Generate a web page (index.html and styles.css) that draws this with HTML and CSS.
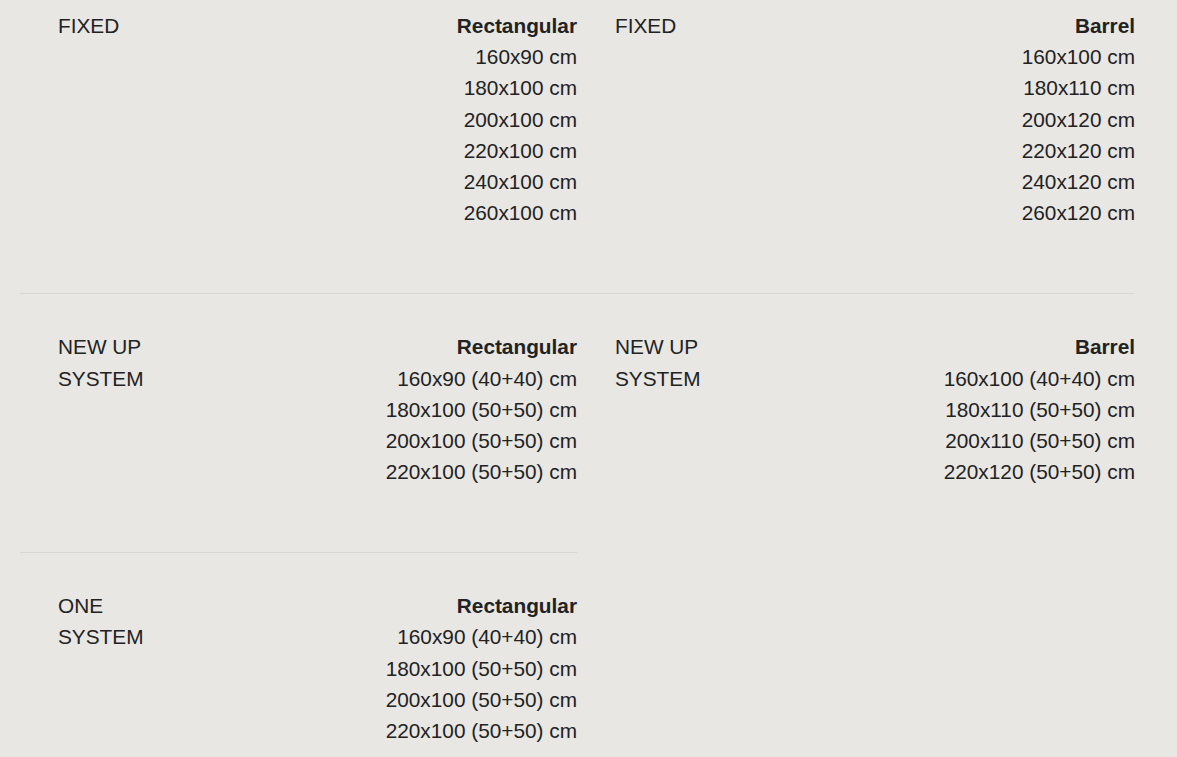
FILE: index.html
```html
<!DOCTYPE html>
<html lang="en">
<head>
    <meta charset="UTF-8">
    <meta name="viewport" content="width=device-width, initial-scale=1.0">
    <title>Table sizes</title>
    <link rel="stylesheet" href="styles.css">
</head>
<body>

<div class="sizes">
    <div class="cell">
        <div class="label">FIXED</div>
        <ul class="values">
            <li class="shape">Rectangular</li>
            <li>160x90 cm</li>
            <li>180x100 cm</li>
            <li>200x100 cm</li>
            <li>220x100 cm</li>
            <li>240x100 cm</li>
            <li>260x100 cm</li>
        </ul>
    </div>
    <div class="cell">
        <div class="label">FIXED</div>
        <ul class="values">
            <li class="shape">Barrel</li>
            <li>160x100 cm</li>
            <li>180x110 cm</li>
            <li>200x120 cm</li>
            <li>220x120 cm</li>
            <li>240x120 cm</li>
            <li>260x120 cm</li>
        </ul>
    </div>
    <div class="cell">
        <div class="label">NEW UP SYSTEM</div>
        <ul class="values">
            <li class="shape">Rectangular</li>
            <li>160x90 (40+40) cm</li>
            <li>180x100 (50+50) cm</li>
            <li>200x100 (50+50) cm</li>
            <li>220x100 (50+50) cm</li>
        </ul>
    </div>
    <div class="cell">
        <div class="label">NEW UP SYSTEM</div>
        <ul class="values">
            <li class="shape">Barrel</li>
            <li>160x100 (40+40) cm</li>
            <li>180x110 (50+50) cm</li>
            <li>200x110 (50+50) cm</li>
            <li>220x120 (50+50) cm</li>
        </ul>
    </div>
    <div class="cell">
        <div class="label">ONE SYSTEM</div>
        <ul class="values">
            <li class="shape">Rectangular</li>
            <li>160x90 (40+40) cm</li>
            <li>180x100 (50+50) cm</li>
            <li>200x100 (50+50) cm</li>
            <li>220x100 (50+50) cm</li>
        </ul>
    </div>
</div>

</body>
</html>
```

FILE: styles.css
```css
body {
    margin: 0;
    font-family: "Liberation Sans", Arial, sans-serif;
    font-size: 20.8px;
    line-height: 1.5;
    color: #222222;
    background-color: #e8e7e4;
}
.sizes {
    display: grid;
    grid-template-columns: 557px 558px;
    margin: -28px 0 0 20px;
}
.cell {
    display: flex;
    justify-content: space-between;
    padding: 37px 0 65px 38px;
    border-top: 1px solid #d9d7d3;
}
.label {
    width: 110px;
}
.values {
    list-style: none;
    margin: 0;
    padding: 0;
    text-align: right;
}
.shape {
    font-weight: bold;
}
```
